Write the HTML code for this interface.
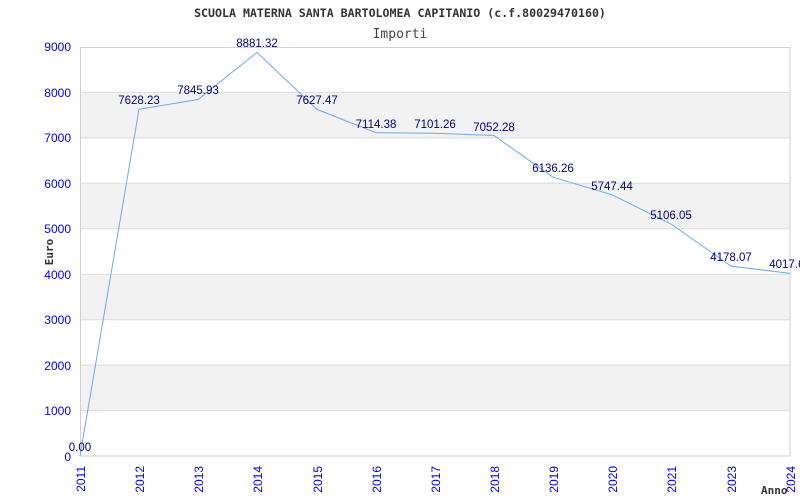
<!DOCTYPE html>
<html><head><meta charset="utf-8"><style>html,body{margin:0;padding:0;background:#fff;}svg{display:block}</style></head><body>
<svg width="800" height="500" xmlns="http://www.w3.org/2000/svg" font-family="Liberation Sans, sans-serif">
<rect width="800" height="500" fill="#fff"/>
<g fill="#f2f2f2">
<rect x="80" y="92.4" width="710" height="45.4"/>
<rect x="80" y="183.3" width="710" height="45.4"/>
<rect x="80" y="274.2" width="710" height="45.4"/>
<rect x="80" y="365.1" width="710" height="45.4"/>
</g>
<g stroke="#dcdcdc" stroke-width="1">
<line x1="80" y1="92.4" x2="790" y2="92.4"/><line x1="80" y1="137.9" x2="790" y2="137.9"/>
<line x1="80" y1="183.3" x2="790" y2="183.3"/><line x1="80" y1="228.8" x2="790" y2="228.8"/>
<line x1="80" y1="274.2" x2="790" y2="274.2"/><line x1="80" y1="319.7" x2="790" y2="319.7"/>
<line x1="80" y1="365.1" x2="790" y2="365.1"/><line x1="80" y1="410.6" x2="790" y2="410.6"/>
<rect x="80.5" y="47.5" width="709.5" height="408.5" fill="none" stroke="#d0d0d0"/>
</g>
<text x="400" y="17" text-anchor="middle" font-family="DejaVu Sans Mono, monospace" font-weight="bold" font-size="11.6" fill="#333">SCUOLA MATERNA SANTA BARTOLOMEA CAPITANIO (c.f.80029470160)</text>
<text x="400" y="38" text-anchor="middle" font-family="DejaVu Sans Mono, monospace" font-size="13" fill="#444">Importi</text>
<g fill="#0000ff" font-size="12" text-anchor="end">
<text x="71" y="51">9000</text><text x="71" y="97">8000</text><text x="71" y="142">7000</text>
<text x="71" y="188">6000</text><text x="71" y="233">5000</text><text x="71" y="279">4000</text>
<text x="71" y="324">3000</text><text x="71" y="370">2000</text><text x="71" y="415">1000</text>
<text x="71" y="461">0</text>
</g>
<text transform="translate(53,252) rotate(-90)" text-anchor="middle" font-family="DejaVu Sans Mono, monospace" font-weight="bold" font-size="11" fill="#333">Euro</text>
<g fill="#0000ff" font-size="12" text-anchor="end">
<text transform="translate(85,466) rotate(-90)">2011</text>
<text transform="translate(144,466) rotate(-90)">2012</text>
<text transform="translate(203,466) rotate(-90)">2013</text>
<text transform="translate(262,466) rotate(-90)">2014</text>
<text transform="translate(322,466) rotate(-90)">2015</text>
<text transform="translate(381,466) rotate(-90)">2016</text>
<text transform="translate(440,466) rotate(-90)">2017</text>
<text transform="translate(499,466) rotate(-90)">2018</text>
<text transform="translate(558,466) rotate(-90)">2019</text>
<text transform="translate(617,466) rotate(-90)">2020</text>
<text transform="translate(676,466) rotate(-90)">2021</text>
<text transform="translate(736,466) rotate(-90)">2023</text>
<text transform="translate(795,466) rotate(-90)">2024</text>
</g>
<text x="761" y="494" font-family="DejaVu Sans Mono, monospace" font-weight="bold" font-size="11" fill="#333">Anno</text>
<polyline fill="none" stroke="#6aaaf0" stroke-width="1" points="80,456 139,109.3 198,99.5 257,52.4 317,109.4 376,132.7 435,133.3 494,135.5 553,177.2 612,194.8 671,224 731,266.1 790,273.4"/>
<g fill="#000080" font-size="11.5" text-anchor="middle">
<text x="80" y="451">0.00</text>
<text x="139" y="104">7628.23</text>
<text x="198" y="94">7845.93</text>
<text x="257" y="47">8881.32</text>
<text x="317" y="104">7627.47</text>
<text x="376" y="128">7114.38</text>
<text x="435" y="128">7101.26</text>
<text x="494" y="131">7052.28</text>
<text x="553" y="172">6136.26</text>
<text x="612" y="190">5747.44</text>
<text x="671" y="219">5106.05</text>
<text x="731" y="261">4178.07</text>
<text x="790" y="268">4017.60</text>
</g>
</svg>
</body></html>
